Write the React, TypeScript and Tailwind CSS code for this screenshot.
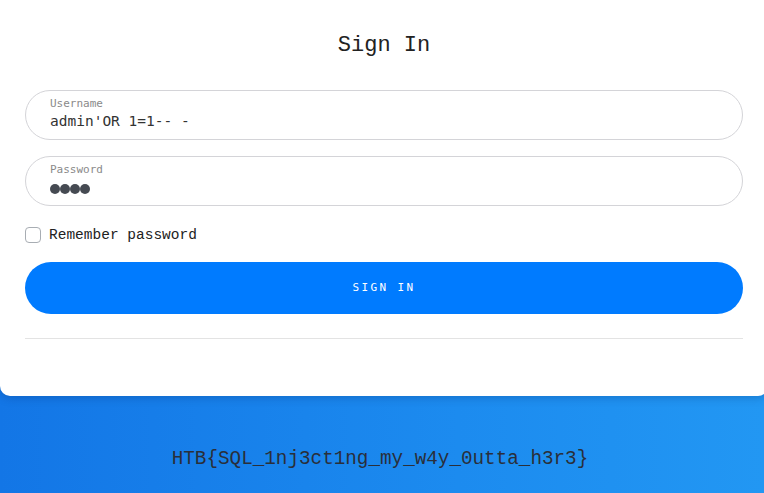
import React from "react";

export default function App() {
  return (
    <div className="w-[764px] h-[493px] overflow-hidden bg-[linear-gradient(90deg,#1376e6_0%,#1c8bef_60%,#2297f3_100%)] flex flex-col">
      <div className="w-[768px] bg-white rounded-b-[10px] h-[396px] shrink-0 px-[25px] pt-[32px] shadow-[0_2px_8px_rgba(0,40,100,0.25)]">
        <h1 className="text-center text-[22px] leading-[28px] text-[#222] font-['Liberation_Mono',monospace]">Sign In</h1>
        <div className="mt-[30px] h-[50px] rounded-full border border-[#d4d4d8] pl-[24px] pt-[6px] flex flex-col">
          <span className="text-[11px] leading-[14px] text-[#8a8a8a] font-['DejaVu_Sans_Mono',monospace]">Username</span>
          <span className="text-[14.5px] leading-[20px] text-[#333] font-['DejaVu_Sans_Mono',monospace]">admin'OR 1=1-- -</span>
        </div>
        <div className="mt-[16px] h-[50px] rounded-full border border-[#d4d4d8] pl-[24px] pt-[6px] flex flex-col">
          <span className="text-[11px] leading-[14px] text-[#8a8a8a] font-['DejaVu_Sans_Mono',monospace]">Password</span>
          <div className="flex gap-0 mt-[7px]">
            {[0, 1, 2, 3].map((i) => (
              <span key={i} className="w-[10px] h-[10px] rounded-full bg-[#454a52]" />
            ))}
          </div>
        </div>
        <label className="mt-[18px] flex items-center gap-[8px]">
          <span className="w-[16px] h-[16px] rounded-[4px] border border-[#a8adb3] bg-white" />
          <span className="text-[14.5px] leading-[20px] text-[#222] font-['Liberation_Mono',monospace] mt-[1px]">Remember password</span>
        </label>
        <button className="mt-[17px] w-full h-[52px] rounded-full bg-[#007bff] text-white text-[11px] tracking-[2.4px] font-['DejaVu_Sans_Mono',monospace] flex items-center justify-center">
          SIGN IN
        </button>
        <div className="mt-[24px] h-px bg-[#e3e3e3]" />
      </div>
      <div className="flex-1 flex items-center justify-center">
        <span className="text-[19.3px] text-[#2a2f3a] font-['Liberation_Mono',monospace] mt-[30px] mr-[4px]">HTB{"{"}SQL_1nj3ct1ng_my_w4y_0utta_h3r3{"}"}</span>
      </div>
    </div>
  );
}
